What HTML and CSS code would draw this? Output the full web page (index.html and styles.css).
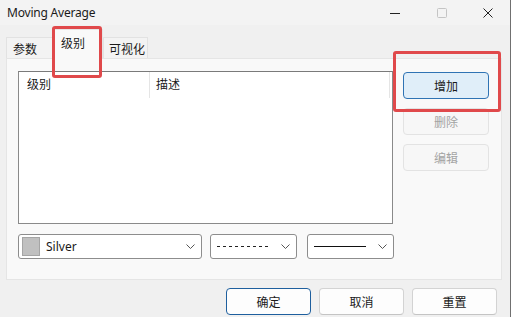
FILE: index.html
```html
<!DOCTYPE html>
<html lang="zh">

<head>
  <meta charset="UTF-8">
  <title>Moving Average</title>
  <link rel="stylesheet" href="styles.css">
</head>

<body>
  <div class="window">
    <div class="titlebar">
      <span class="title">Moving Average</span>
      <div class="controls">
        <svg class="ctl ctl__min" width="10" height="10" viewBox="0 0 10 10"><path d="M0 5.5h10" stroke="#222" stroke-width="1"/></svg>
        <svg class="ctl ctl__max" width="10" height="10" viewBox="0 0 10 10"><rect x="0.5" y="0.5" width="9" height="9" rx="1" fill="none" stroke="#c4c4c4"/></svg>
        <svg class="ctl ctl__close" width="10" height="10" viewBox="0 0 10 10"><path d="M0.5 0.5l9 9M9.5 0.5l-9 9" stroke="#222" stroke-width="1"/></svg>
      </div>
    </div>

    <div class="tabs">
      <div class="tab tab--first">参数</div>
      <div class="tab tab--active">级别</div>
      <div class="tab tab--last">可视化</div>
    </div>

    <div class="panel">
      <div class="main">
        <div class="list">
          <div class="list__head">
            <div class="col col--level">级别</div>
            <div class="col col--desc">描述</div>
            <div class="col col--end"></div>
          </div>
        </div>
        <div class="side">
          <button class="btn btn--primary">增加</button>
          <button class="btn btn--disabled">删除</button>
          <button class="btn btn--disabled">编辑</button>
        </div>
      </div>

      <div class="combos">
        <div class="combo combo--color">
          <span class="swatch"></span>
          <span class="combo__text">Silver</span>
          <svg class="chev" width="9" height="5" viewBox="0 0 9 5"><path d="M0.5 0.5l4 4 4-4" fill="none" stroke="#555"/></svg>
        </div>
        <div class="combo combo--style">
          <span class="line line--dash"></span>
          <svg class="chev" width="9" height="5" viewBox="0 0 9 5"><path d="M0.5 0.5l4 4 4-4" fill="none" stroke="#555"/></svg>
        </div>
        <div class="combo combo--style">
          <span class="line line--solid"></span>
          <svg class="chev" width="9" height="5" viewBox="0 0 9 5"><path d="M0.5 0.5l4 4 4-4" fill="none" stroke="#555"/></svg>
        </div>
      </div>
    </div>

    <div class="footer">
      <button class="btn btn--default">确定</button>
      <button class="btn">取消</button>
      <button class="btn">重置</button>
    </div>

    <!-- 강조 표시 -->
    <div class="mark mark--tab"></div>
    <div class="mark mark--add"></div>
  </div>
</body>

</html>
```

FILE: styles.css
```css
* {
  box-sizing: border-box;
}

body {
  margin: 0;
  font-family: "Noto Sans", "Noto Sans CJK SC", sans-serif;
  font-size: 12px;
  color: #1a1a1a;
}

.window {
  position: relative;
  width: 511px;
  height: 317px;
  background: #f0f0f0;
  border-right: 1px solid #707070;
  overflow: hidden;
}

.titlebar {
  display: flex;
  align-items: center;
  height: 25px;
  padding-left: 7px;
  background: #f3f3f3;
}

.titlebar .title {
  flex: 1;
  font-size: 12px;
  letter-spacing: -0.2px;
}

.titlebar .controls {
  display: flex;
  align-items: center;
  padding-right: 17px;
}

.titlebar .ctl {
  display: block;
}

.titlebar .ctl__min {
  margin-right: 37px;
}

.titlebar .ctl__max {
  margin-right: 36px;
}

.tabs {
  display: flex;
  align-items: flex-end;
  height: 33px;
  padding-left: 6px;
}

.tabs .tab {
  height: 21px;
  line-height: 21px;
  background: #f3f3f3;
  border: 1px solid #e2e2e2;
  border-bottom: none;
  font-family: "Noto Sans CJK SC", sans-serif;
}

.tabs .tab--first {
  width: 47px;
  padding-left: 6px;
}

.tabs .tab--last {
  width: 45px;
  padding-left: 5px;
}

.tabs .tab--active {
  width: 50px;
  height: 30px;
  padding-left: 7px;
  line-height: 26px;
  background: #f9f9f9;
  border-color: #e5e5e5;
  margin-bottom: -1px;
  position: relative;
}

.panel {
  margin: 0 8px 0 6px;
  height: 222px;
  padding: 12px 12px 0 11px;
  background: #f9f9f9;
  border: 1px solid #e5e5e5;
}

.panel .main {
  display: flex;
  align-items: flex-start;
}

.list {
  width: 376px;
  height: 153px;
  background: #fff;
  border: 1px solid #8a8a8a;
  border-top-color: #7a7a7a;
}

.list__head {
  display: flex;
  height: 26px;
  font-family: "Noto Sans CJK SC", sans-serif;
}

.list__head .col {
  line-height: 24px;
  padding-left: 8px;
}

.list__head .col--level {
  width: 131px;
  border-right: 1px solid #e5e5e5;
}

.list__head .col--desc {
  flex: 1;
  padding-left: 6px;
}

.list__head .col--end {
  width: 3px;
  padding: 0;
  border-left: 1px solid #e5e5e5;
}

.side {
  display: flex;
  flex-direction: column;
  gap: 9px;
  margin-left: 10px;
  padding-top: 1px;
}

.btn {
  width: 86px;
  height: 27px;
  padding: 0;
  font-family: "Noto Sans CJK SC", sans-serif;
  font-size: 12px;
  color: #1a1a1a;
  background: #fdfdfd;
  border: 1px solid #d3d3d3;
  border-bottom-color: #c4c4c4;
  border-radius: 4px;
}

.btn--primary {
  background: #e0eef9;
  border: 1px solid #2f73b4;
}

.btn--disabled {
  color: #a3a3a3;
  background: #f7f7f7;
  border-color: #e3e3e3;
}

.btn--default {
  border: 1px solid #1e5f9e;
}

.combos {
  display: flex;
  margin-top: 10px;
}

.combo {
  display: flex;
  align-items: center;
  height: 25px;
  background: #fff;
  border: 1px solid #8d8d8d;
  border-radius: 3px;
  padding: 0 6px 0 3px;
}

.combo--color {
  width: 184px;
  margin-right: 8px;
}

.combo--style {
  width: 87px;
  padding-left: 6px;
  margin-right: 10px;
}

.combo .swatch {
  width: 18px;
  height: 19px;
  background: #c0c0c0;
  border: 1px solid #a5a5a5;
}

.combo__text {
  flex: 1;
  margin-left: 6px;
  font-size: 12px;
}

.combo .line {
  flex: 1;
  margin-right: 12px;
}

.line--dash {
  height: 1px;
  background: repeating-linear-gradient(90deg, #222 0 3px, transparent 3px 6px);
}

.line--solid {
  height: 1px;
  background: #111;
}

.combo .chev {
  display: block;
}

.footer {
  display: flex;
  justify-content: flex-end;
  gap: 8px;
  padding: 8px 13px 0 0;
}

.footer .btn {
  width: 85px;
}

.mark {
  position: absolute;
  border: 3px solid #e0494b;
  border-radius: 3px;
}

.mark--tab {
  left: 52px;
  top: 26px;
  width: 50px;
  height: 52px;
}

.mark--add {
  left: 393px;
  top: 51px;
  width: 108px;
  height: 61px;
}
```
